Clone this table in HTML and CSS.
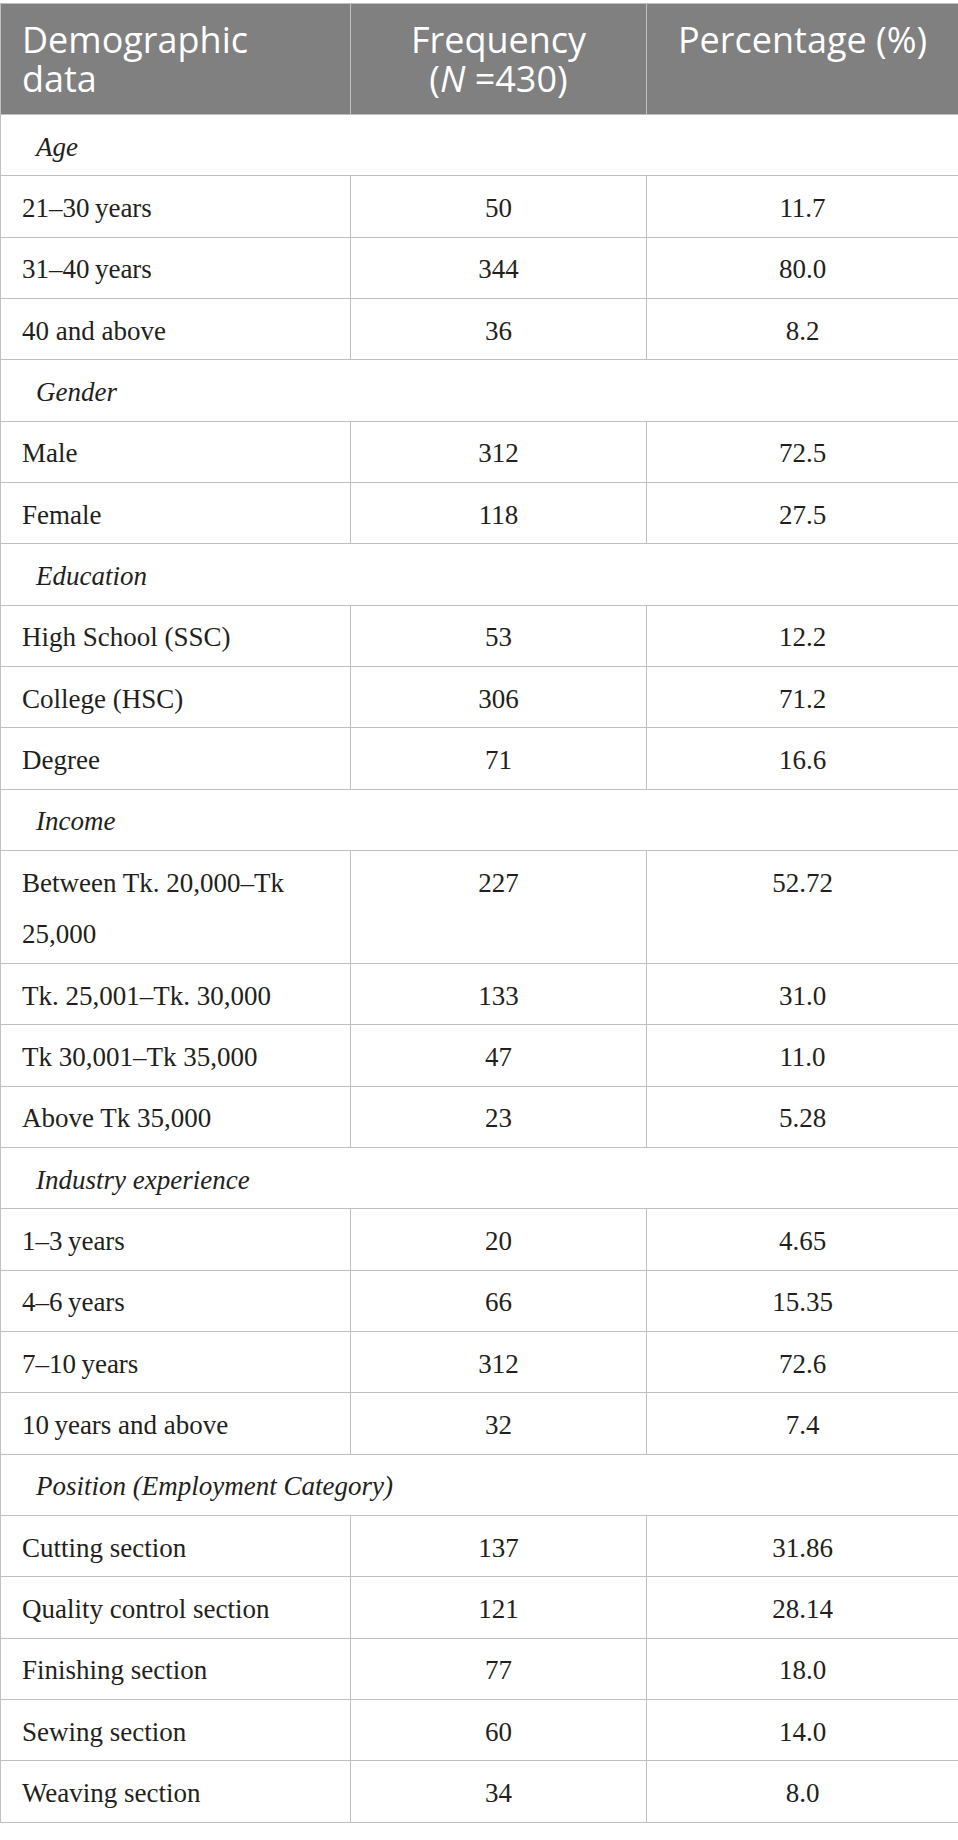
FILE: index.html
```html
<!DOCTYPE HTML>
<html>
<head>
  <meta charset="UTF-8">
  <title>Demographic data</title>
  <meta name="viewport" content="width=device-width, initial-scale=1">
  <link rel="stylesheet" href="styles.css">
</head>
<body>
  <table class="demo">
    <colgroup>
      <col class="c1">
      <col class="c2">
      <col class="c3">
    </colgroup>
    <thead>
      <tr>
        <th class="left">Demographic<br>data</th>
        <th>Frequency<br>(<i>N</i> =430)</th>
        <th>Percentage (%)</th>
      </tr>
    </thead>
    <tbody>
      <tr class="group"><td colspan="3">Age</td></tr>
      <tr><td>21–30&#8201;years</td><td>50</td><td>11.7</td></tr>
      <tr><td>31–40&#8201;years</td><td>344</td><td>80.0</td></tr>
      <tr><td>40 and above</td><td>36</td><td>8.2</td></tr>

      <tr class="group"><td colspan="3">Gender</td></tr>
      <tr><td>Male</td><td>312</td><td>72.5</td></tr>
      <tr><td>Female</td><td>118</td><td>27.5</td></tr>

      <tr class="group"><td colspan="3">Education</td></tr>
      <tr><td>High School (SSC)</td><td>53</td><td>12.2</td></tr>
      <tr><td>College (HSC)</td><td>306</td><td>71.2</td></tr>
      <tr><td>Degree</td><td>71</td><td>16.6</td></tr>

      <tr class="group"><td colspan="3">Income</td></tr>
      <tr><td>Between Tk. 20,000–Tk 25,000</td><td>227</td><td>52.72</td></tr>
      <tr><td>Tk. 25,001–Tk. 30,000</td><td>133</td><td>31.0</td></tr>
      <tr><td>Tk 30,001–Tk 35,000</td><td>47</td><td>11.0</td></tr>
      <tr><td>Above Tk 35,000</td><td>23</td><td>5.28</td></tr>

      <tr class="group"><td colspan="3">Industry experience</td></tr>
      <tr><td>1–3&#8201;years</td><td>20</td><td>4.65</td></tr>
      <tr><td>4–6&#8201;years</td><td>66</td><td>15.35</td></tr>
      <tr><td>7–10&#8201;years</td><td>312</td><td>72.6</td></tr>
      <tr><td>10&#8201;years and above</td><td>32</td><td>7.4</td></tr>

      <tr class="group"><td colspan="3">Position (Employment Category)</td></tr>
      <tr><td>Cutting section</td><td>137</td><td>31.86</td></tr>
      <tr><td>Quality control section</td><td>121</td><td>28.14</td></tr>
      <tr><td>Finishing section</td><td>77</td><td>18.0</td></tr>
      <tr><td>Sewing section</td><td>60</td><td>14.0</td></tr>
      <tr><td>Weaving section</td><td>34</td><td>8.0</td></tr>
    </tbody>
  </table>
</body>
</html>
```

FILE: styles.css
```css
body { margin: 0; padding: 3px 0 0; background: #fff; }

.demo {
  width: 958px;
  border-collapse: collapse;
  table-layout: fixed;
  border: 1px solid #c0c0c0;
  font-family: "Liberation Serif", "Times New Roman", serif;
  color: #231f20;
}

.demo .c1 { width: 350px; }
.demo .c2 { width: 296px; }
.demo .c3 { width: 312px; }

/* header row */
.demo th {
  background: #7f807f;
  color: #fff;
  font-family: "Open Sans", sans-serif;
  font-weight: normal;
  font-size: 36px;
  line-height: 39px;
  text-align: center;
  vertical-align: top;
  padding: 16px 21px 16px;
  border: 1px solid #c0c0c0;
}
.demo th.left { text-align: left; }

/* body cells */
.demo td {
  font-size: 27px;
  line-height: 51.67px;
  padding: 6.67px 21px 2px;
  vertical-align: top;
  text-align: center;
  border: 1px solid #c0c0c0;
}
.demo td:first-child { text-align: left; }

.demo tr.group td {
  font-style: italic;
  padding-left: 35px;
}
```
